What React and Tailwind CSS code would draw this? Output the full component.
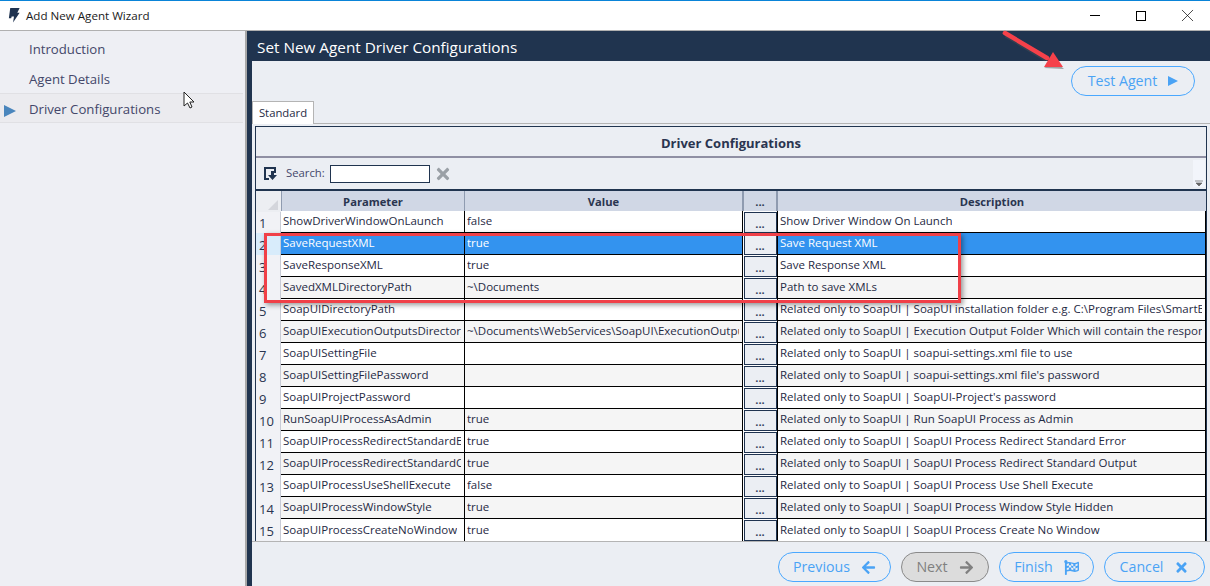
import { X } from "lucide-react";
import { FaArrowLeft, FaArrowRight, FaTimes, FaFlagCheckered } from "react-icons/fa";

const rows = [
  ["ShowDriverWindowOnLaunch", "false", "Show Driver Window On Launch"],
  ["SaveRequestXML", "true", "Save Request XML"],
  ["SaveResponseXML", "true", "Save Response XML"],
  ["SavedXMLDirectoryPath", "~\\Documents", "Path to save XMLs"],
  ["SoapUIDirectoryPath", "", "Related only to SoapUI | SoapUI installation folder e.g. C:\\Program Files\\SmartBear\\SoapUI-5.4.0\\bin"],
  ["SoapUIExecutionOutputsDirectory", "~\\Documents\\WebServices\\SoapUI\\ExecutionOutputs", "Related only to SoapUI | Execution Output Folder Which will contain the response files"],
  ["SoapUISettingFile", "", "Related only to SoapUI | soapui-settings.xml file to use"],
  ["SoapUISettingFilePassword", "", "Related only to SoapUI | soapui-settings.xml file's password"],
  ["SoapUIProjectPassword", "", "Related only to SoapUI | SoapUI-Project's password"],
  ["RunSoapUIProcessAsAdmin", "true", "Related only to SoapUI | Run SoapUI Process as Admin"],
  ["SoapUIProcessRedirectStandardError", "true", "Related only to SoapUI | SoapUI Process Redirect Standard Error"],
  ["SoapUIProcessRedirectStandardOutput", "true", "Related only to SoapUI | SoapUI Process Redirect Standard Output"],
  ["SoapUIProcessUseShellExecute", "false", "Related only to SoapUI | SoapUI Process Use Shell Execute"],
  ["SoapUIProcessWindowStyle", "true", "Related only to SoapUI | SoapUI Process Window Style Hidden"],
  ["SoapUIProcessCreateNoWindow", "true", "Related only to SoapUI | SoapUI Process Create No Window"],
];

const cols = "grid grid-cols-[25px_184px_277px_36px_428px]";

function Play({ className }) {
  return (
    <svg viewBox="0 0 10 10" className={className}>
      <path d="M0 0 L10 5 L0 10 Z" fill="currentColor" />
    </svg>
  );
}

function NavItem({ label, active }) {
  return (
    <div className={`h-[30px] flex items-center pl-[29px] pt-[4px] relative text-[13.2px] text-[#44476a] ${active ? "bg-[#ebebef] border-y border-[#e0e0e4] mr-[2px]" : ""}`}>
      {active && <Play className="absolute left-[4px] top-[11px] w-3 h-3 text-[#4a86bd]" />}
      {label}
    </div>
  );
}

function PillButton({ label, children, disabled, width }) {
  return (
    <button className={`h-[30px] rounded-full border flex items-center justify-center gap-[11px] text-[14.2px] ${width} ${disabled ? "border-[#8a8a8a] bg-[#dcdcdc] text-[#808080]" : "border-[#4aa8ff] text-[#4aa3f5]"}`}>
      {label}
      {children}
    </button>
  );
}

function GridRow({ index, row }) {
  const selected = index === 1;
  const alt = index % 2 === 1;
  const last = index === rows.length - 1;
  const bg = selected ? "bg-[#3393ef] text-white" : alt ? "bg-[#f5f5f5] text-[#1f2a44]" : "bg-white text-[#1f2a44]";
  const cell = `pl-[2px] pr-[3px] pb-[1px] flex items-center min-w-0 ${last ? "" : "border-b border-black"}`;
  const text = "block overflow-hidden whitespace-nowrap";
  return (
    <div className={`${cols} h-[22px] text-[11.5px]`}>
      <div className={`flex items-end pl-[3px] text-[13px] text-[#2a3550] border-r border-[#c9ccd6] ${selected ? "bg-[#d8ecfb]" : "bg-[#f1f2f6]"}`}>
        {index + 1}
      </div>
      <div className={`${cell} ${bg} border-r border-r-black`}><span className={text}>{row[0]}</span></div>
      <div className={`${cell} ${bg}`}><span className={text}>{row[1]}</span></div>
      <div className="bg-white border-x border-black flex justify-center pt-[1px]">
        <button className="w-[33px] h-[21px] bg-[#ebeef3] border border-[#1f3350] text-[11px] font-bold leading-[22px] text-[#33415c]">...</button>
      </div>
      <div className={`${cell} ${bg} border-r border-r-black`}><span className={text}>{row[2]}</span></div>
    </div>
  );
}

export default function App() {
  return (
    <div className="w-[1210px] h-[586px] relative overflow-hidden bg-white font-['Open_Sans','Noto_Sans',sans-serif] border-t border-[#0a84d8]">
      {/* Title bar */}
      <div className="h-[30px] flex items-center justify-between bg-white border-b border-[#b0b0b0]">
        <div className="flex items-center pl-[8px] gap-[6px] text-[11.6px] text-[#1a1a1a]">
          <svg viewBox="0 0 12 16" className="w-[12px] h-[15px]">
            <path d="M2 0 L12 0 L9.5 5 L12 5 L5 15.5 L6 9 L3.5 9 L3 11 L0.5 11 Z" fill="#1f3350" />
          </svg>
          Add New Agent Wizard
        </div>
        <div className="flex items-center">
          <div className="w-[46px] flex justify-center"><div className="w-[10px] h-px bg-black" /></div>
          <div className="w-[46px] flex justify-center"><div className="w-[10px] h-[10px] border border-black" /></div>
          <div className="w-[46px] flex justify-center"><X size={21} strokeWidth={0.8} color="#000" /></div>
        </div>
      </div>

      <div className="h-[555px] flex">
        {/* Sidebar */}
        <div className="w-[247px] bg-[#eeeff4] border-r-2 border-[#a8a8a8] pt-[2px]">
          <NavItem label="Introduction" />
          <NavItem label="Agent Details" />
          <NavItem label="Driver Configurations" active />
        </div>

        {/* Main panel */}
        <div className="flex-1 flex flex-col bg-[#ebeef3] border-l-[5px] border-[#20344f]">
          <div className="h-[30px] -ml-[5px] pl-[10px] pt-[3px] bg-[#20344f] text-white text-[15.3px] flex items-center">
            Set New Agent Driver Configurations
          </div>
          <div className="h-[40px] flex justify-end pt-[5px] pr-[15px]">
            <PillButton label="Test Agent" width="w-[124px]">
              <Play className="w-[10px] h-[10px] text-[#4aa3f5]" />
            </PillButton>
          </div>

          {/* Tab */}
          <div className="w-[62px] h-[23px] bg-white border border-b-0 border-[#b4b4b4] flex items-center justify-center text-[11.3px] text-[#1f2a44] z-10">
            Standard
          </div>
          <div className="h-[419px] -mt-px border-y border-[#b4b4b4] pt-[2px] pl-[3px] pr-[2px]">
            <div className="w-[952px] h-[415px] border-x border-[#20344f] overflow-hidden">
              <div className="h-[32px] pt-[4px] border-y border-[#20344f] border-b-[#8f8fa3] border-b-2 flex items-center justify-center text-[13px] font-bold text-[#2a3550]">
                Driver Configurations
              </div>
              <div className="h-[31px] flex items-center pl-[7px] gap-[8px] text-[11.3px] text-[#44476a] relative">
                <svg viewBox="0 0 15 15" className="w-[15px] h-[15px]">
                  <path d="M1 1 H13 V7 H11 V3 H3 V12 H6 V14 H1 Z" fill="#20344f" />
                  <path d="M8 5 H11 V9 H14 L9.5 14 L5 9 H8 Z" fill="#20344f" />
                </svg>
                Search:
                <input className="w-[100px] h-[18px] -ml-[3px] bg-white border border-[#20344f]" readOnly />
                <FaTimes size={18} color="#9aa0a6" className="-ml-[4px]" />
                <div className="absolute right-[1px] top-[2px] w-[12px] h-[27px] bg-[#f2f5fb]" />
                <svg viewBox="0 0 8 8" className="absolute right-[3px] bottom-[2px] w-[8px] h-[8px]">
                  <path d="M0 2 H8 M1 4 H7 L4 7 Z" fill="#666" stroke="#666" strokeWidth="0.7" />
                </svg>
              </div>
              <div className={`${cols} h-[22px] border-t-2 border-[#20344f] bg-[#d0d7e5] text-[11.2px] font-bold leading-[21px] text-[#2a3550] text-center`}>
                <div className="bg-[#eceef2] relative">
                  <svg viewBox="0 0 10 10" className="absolute right-[3px] bottom-[2px] w-[10px] h-[10px]">
                    <path d="M10 0 V10 H0 Z" fill="#d4d6dc" />
                  </svg>
                </div>
                <div className="border-x border-[#8f9bb0]">Parameter</div>
                <div>Value</div>
                <div className="border-x-2 border-[#8f9bb0]">...</div>
                <div>Description</div>
              </div>
              {rows.map((row, i) => (
                <GridRow key={row[0]} index={i} row={row} />
              ))}
            </div>
          </div>

          {/* Footer buttons */}
          <div className="flex-1 flex justify-end gap-[10px] pt-[10px] pr-[5px]">
            <PillButton label="Previous" width="w-[113px]"><FaArrowLeft size={15} /></PillButton>
            <PillButton label="Next" disabled width="w-[88px]"><FaArrowRight size={15} /></PillButton>
            <PillButton label="Finish" width="w-[95px]"><FaFlagCheckered size={15} /></PillButton>
            <PillButton label="Cancel" width="w-[101px]"><FaTimes size={15} /></PillButton>
          </div>
        </div>
      </div>

      {/* Annotation box */}
      <div className="absolute left-[264px] top-[232px] w-[697px] h-[70px] border-[3px] border-[#f04048] shadow-[2px_2px_5px_rgba(0,0,0,0.4)] pointer-events-none" />

      {/* Annotation arrow */}
      <svg viewBox="0 0 70 50" className="absolute left-[1000px] top-[27px] w-[70px] h-[50px]">
        <path d="M6 7 L46 31" stroke="#555" strokeOpacity="0.35" strokeWidth="5" />
        <path d="M44 40 L64 41 L56 34 Z" fill="#555" fillOpacity="0.5" />
        <path d="M5 5 L47 30" stroke="#f5414a" strokeWidth="4.5" strokeLinecap="round" />
        <path d="M53 24 L63 39 L44 39 Z" fill="#f5414a" />
      </svg>

      {/* Mouse cursor */}
      <svg viewBox="0 0 12 18" className="absolute left-[183px] top-[90px] w-[12px] h-[18px]">
        <path d="M1 1 V15 L4.5 12 L7 17 L9 16 L6.8 11 H11 Z" fill="#fff" stroke="#222" strokeWidth="1" />
      </svg>
    </div>
  );
}
